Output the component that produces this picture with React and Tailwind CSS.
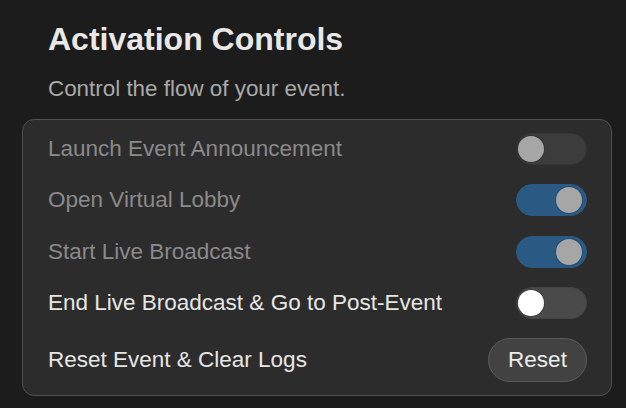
import React, { useState } from "react";

const ROWS = [
  { id: "announce", label: "Launch Event Announcement", on: false, locked: true },
  { id: "lobby", label: "Open Virtual Lobby", on: true, locked: true },
  { id: "broadcast", label: "Start Live Broadcast", on: true, locked: true },
  { id: "post", label: "End Live Broadcast & Go to Post-Event", on: false, locked: false },
];

function Toggle({ on, locked, onChange }) {
  const track = on
    ? "bg-[#2a5a84] border-[#2a5a84]"
    : locked
    ? "bg-[#3c3c3c] border-[#353535]"
    : "bg-[#4a4a4a] border-[#444444]";
  const knob = locked ? "bg-[#a6a6a6]" : "bg-white";
  return (
    <button
      onClick={() => !locked && onChange(!on)}
      className={`w-[71px] h-[32px] rounded-full border flex items-center px-[1px] transition-colors ${track}`}
    >
      <span
        className={`w-[26px] h-[26px] rounded-full shadow-[0_0_0_1px_rgba(0,0,0,0.15)] transition-transform ${knob} ${
          on ? "translate-x-[38px]" : "translate-x-0"
        }`}
      />
    </button>
  );
}

export default function App() {
  const [rows, setRows] = useState(ROWS);

  const setRow = (id, on) => {
    setRows((prev) => prev.map((r) => (r.id === id ? { ...r, on } : r)));
  };

  return (
    <div
      className="w-[626px] h-[408px] bg-[#1c1c1c] pl-[22px] pt-[21px] overflow-hidden"
      style={{ fontFamily: '"Liberation Sans", Arial, sans-serif' }}
    >
      <div className="pl-[26px]">
        <h2 className="text-[32px] leading-[36px] font-bold text-[#e8e8e8]">Activation Controls</h2>
        <p className="mt-[19px] text-[22.4px] leading-[26px] text-[#a9a9a9]">Control the flow of your event.</p>
      </div>

      <div className="mt-[17px] w-[590px] rounded-[12px] border border-[#4f4f4f] bg-[#2c2c2c] pl-[25px] pr-[24px] py-[13px] flex flex-col gap-[19.3px]">
        {rows.map((r) => (
          <div key={r.id} className="flex items-center justify-between">
            <span className={`text-[22.5px] leading-[26px] ${r.locked ? "text-[#8a8a8a]" : "text-[#e6e6e6]"}`}>
              {r.label}
            </span>
            <Toggle on={r.on} locked={r.locked} onChange={(v) => setRow(r.id, v)} />
          </div>
        ))}
        <div className="flex items-center justify-between">
          <span className="text-[22.5px] leading-[26px] text-[#e6e6e6]">Reset Event &amp; Clear Logs</span>
          <button
            onClick={() => setRows(ROWS)}
            className="w-[99px] h-[44px] rounded-full bg-[#424242] border border-[#5a5a5a] text-[22.5px] text-[#ececec]"
          >
            Reset
          </button>
        </div>
      </div>
    </div>
  );
}
